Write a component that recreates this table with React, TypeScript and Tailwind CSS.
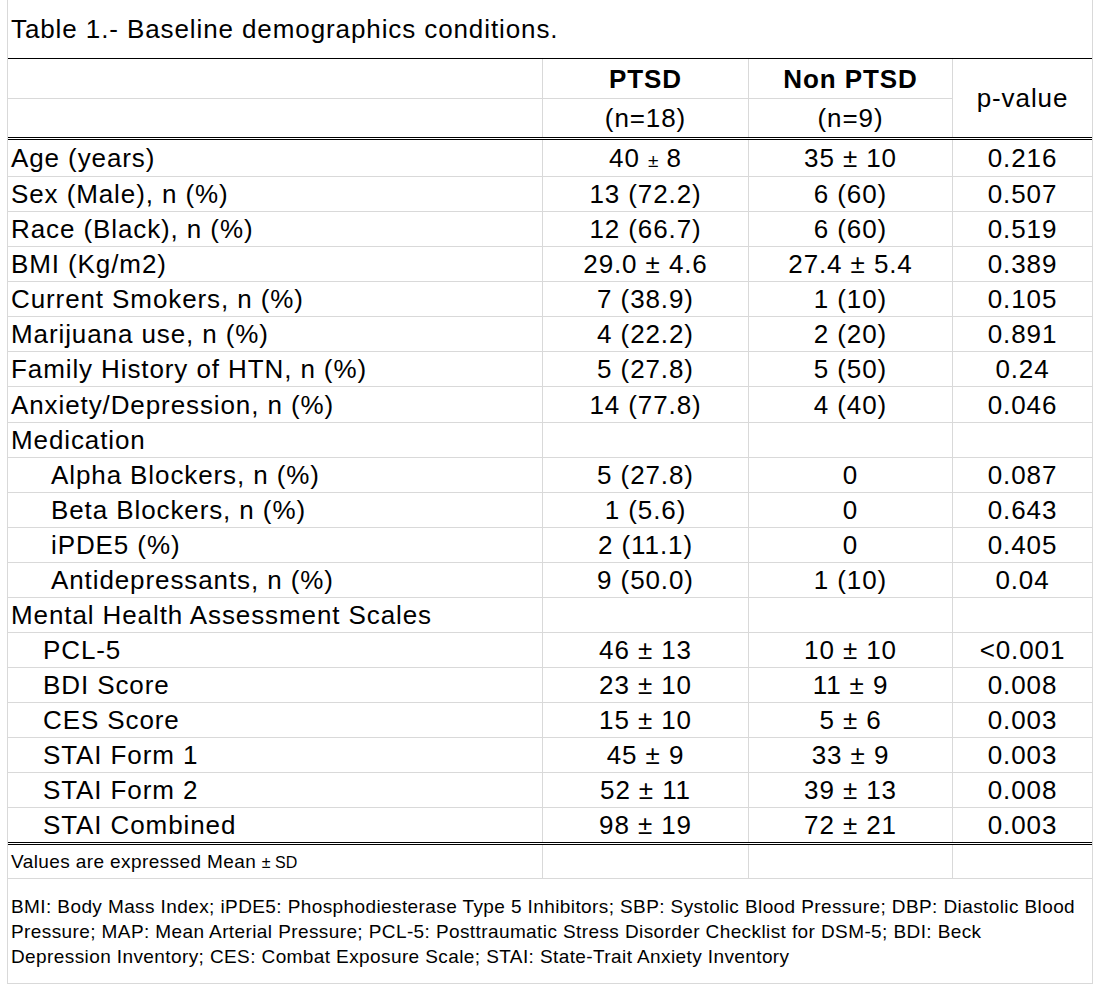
import React from "react";

type Row = {
  label: string;
  a?: React.ReactNode;
  b?: React.ReactNode;
  p?: string;
  h: string;
  indent?: string;
  last?: boolean;
};

const rows: Row[] = [
  { label: "Age (years)", a: (<span>40 <span className="text-[19px] tracking-normal">±</span> 8</span>), b: "35 ± 10", p: "0.216", h: "h-[37px]" },
  { label: "Sex (Male), n (%)", a: "13 (72.2)", b: "6 (60)", p: "0.507", h: "h-[35px]" },
  { label: "Race (Black), n (%)", a: "12 (66.7)", b: "6 (60)", p: "0.519", h: "h-[35px]" },
  { label: "BMI (Kg/m2)", a: "29.0 ± 4.6", b: "27.4 ± 5.4", p: "0.389", h: "h-[35px]" },
  { label: "Current Smokers, n (%)", a: "7 (38.9)", b: "1 (10)", p: "0.105", h: "h-[35px]" },
  { label: "Marijuana use, n (%)", a: "4 (22.2)", b: "2 (20)", p: "0.891", h: "h-[35px]" },
  { label: "Family History of HTN, n (%)", a: "5 (27.8)", b: "5 (50)", p: "0.24", h: "h-[35px]" },
  { label: "Anxiety/Depression, n (%)", a: "14 (77.8)", b: "4 (40)", p: "0.046", h: "h-[36px]" },
  { label: "Medication", h: "h-[35px]" },
  { label: "Alpha Blockers, n (%)", a: "5 (27.8)", b: "0", p: "0.087", h: "h-[35px]", indent: "pl-[43px]" },
  { label: "Beta Blockers, n (%)", a: "1 (5.6)", b: "0", p: "0.643", h: "h-[35px]", indent: "pl-[43px]" },
  { label: "iPDE5 (%)", a: "2 (11.1)", b: "0", p: "0.405", h: "h-[35px]", indent: "pl-[43px]" },
  { label: "Antidepressants, n (%)", a: "9 (50.0)", b: "1 (10)", p: "0.04", h: "h-[35px]", indent: "pl-[43px]" },
  { label: "Mental Health Assessment Scales", h: "h-[35px]" },
  { label: "PCL-5", a: "46 ± 13", b: "10 ± 10", p: "<0.001", h: "h-[35px]", indent: "pl-[35px]" },
  { label: "BDI Score", a: "23 ± 10", b: "11 ± 9", p: "0.008", h: "h-[35px]", indent: "pl-[35px]" },
  { label: "CES Score", a: "15 ± 10", b: "5 ± 6", p: "0.003", h: "h-[35px]", indent: "pl-[35px]" },
  { label: "STAI Form 1", a: "45 ± 9", b: "33 ± 9", p: "0.003", h: "h-[35px]", indent: "pl-[35px]" },
  { label: "STAI Form 2", a: "52 ± 11", b: "39 ± 13", p: "0.008", h: "h-[35px]", indent: "pl-[35px]" },
  { label: "STAI Combined", a: "98 ± 19", b: "72 ± 21", p: "0.003", h: "h-[34px]", indent: "pl-[35px]", last: true },
];

const cols = "grid grid-cols-[535px_206px_204px_139px]";
const font = { fontFamily: '"Liberation Sans", Arial, sans-serif' };

export default function App() {
  return (
    <div className="w-[1093px] h-[987px] bg-white text-black" style={font}>
      <div className="ml-[7px] w-[1086px] border-x border-[#d9d9d9]">
        {/* Title */}
        <div className="h-[58px] flex items-center pl-[3px] text-[26px] tracking-[0.9px] leading-none">
          Table 1.- Baseline demographics conditions.
        </div>

        {/* Header */}
        <div className={`${cols} grid-rows-[40px_38px] border-t border-black text-[26px] tracking-[0.9px] leading-none`}>
          <div className="border-r border-b border-[#d9d9d9]" />
          <div className="border-r border-b border-[#d9d9d9] flex items-center justify-center font-bold">PTSD</div>
          <div className="border-r border-b border-[#d9d9d9] flex items-center justify-center font-bold">Non PTSD</div>
          <div className="row-span-2 flex items-center justify-center">p-value</div>
          <div className="border-r border-[#d9d9d9]" />
          <div className="border-r border-[#d9d9d9] flex items-center justify-center">(n=18)</div>
          <div className="border-r border-[#d9d9d9] flex items-center justify-center">(n=9)</div>
        </div>
        <div className="h-[3px] border-y border-black" />

        {/* Body */}
        {rows.map((r) => (
          <div
            key={r.label}
            className={`${cols} ${r.h} ${r.last ? "" : "border-b border-[#d9d9d9]"} text-[26px] tracking-[0.9px] leading-none`}
          >
            <div className={`border-r border-[#d9d9d9] flex items-center whitespace-nowrap ${r.indent ?? "pl-[3px]"}`}>
              {r.label}
            </div>
            <div className="border-r border-[#d9d9d9] flex items-center justify-center whitespace-nowrap">{r.a}</div>
            <div className="border-r border-[#d9d9d9] flex items-center justify-center whitespace-nowrap">{r.b}</div>
            <div className="flex items-center justify-center whitespace-nowrap">{r.p}</div>
          </div>
        ))}
        <div className="h-[3px] border-y border-black" />

        {/* Values row */}
        <div className={`${cols} h-[34px] border-b border-[#d9d9d9] text-[19px] tracking-[0.4px] leading-none`}>
          <div className="border-r border-[#d9d9d9] flex items-center pl-[3px] whitespace-nowrap">
            <span>
              Values are expressed Mean <span className="text-[16px] tracking-normal">± SD</span>
            </span>
          </div>
          <div className="border-r border-[#d9d9d9]" />
          <div className="border-r border-[#d9d9d9]" />
          <div />
        </div>

        {/* Footnote */}
        <div className="h-[105px] border-b border-[#d9d9d9] flex items-center pl-[3px] text-[19px] tracking-[0.4px] leading-[25px]">
          <div className="flex flex-col whitespace-nowrap">
            <span>BMI: Body Mass Index; iPDE5: Phosphodiesterase Type 5 Inhibitors; SBP: Systolic Blood Pressure; DBP: Diastolic Blood</span>
            <span>Pressure; MAP: Mean Arterial Pressure; PCL-5: Posttraumatic Stress Disorder Checklist for DSM-5; BDI: Beck</span>
            <span>Depression Inventory; CES: Combat Exposure Scale; STAI: State-Trait Anxiety Inventory</span>
          </div>
        </div>
      </div>
    </div>
  );
}
